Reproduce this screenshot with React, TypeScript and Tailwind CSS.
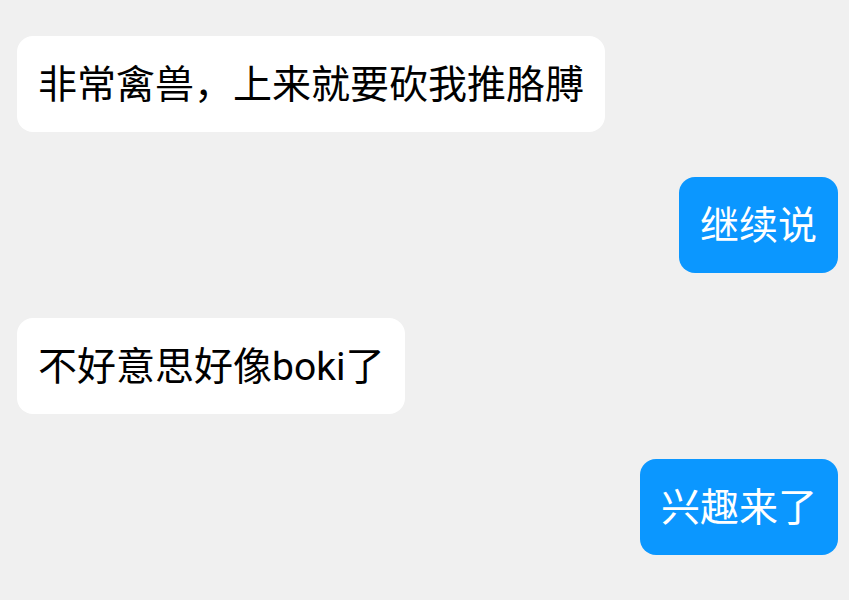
const messages = [
  { from: "them", text: "非常禽兽，上来就要砍我推胳膊" },
  { from: "me", text: "继续说" },
  { from: "them", text: "不好意思好像boki了" },
  { from: "me", text: "兴趣来了" },
];

const App = () => {
  return (
    <div
      className="min-h-[600px] w-full bg-[#f0f0f0] pt-[36px] pl-[17px] pr-[11px] flex flex-col gap-[45px]"
      style={{ fontFamily: 'Roboto, "Noto Sans CJK SC", sans-serif' }}
    >
      {messages.map((m, i) => (
        <div key={i} className={m.from === "me" ? "flex justify-end" : "flex justify-start"}>
          <div
            className={
              m.from === "me"
                ? "rounded-[16px] bg-[#0b97ff] text-white px-[21px] pt-[21px] pb-[19px] text-[39px] leading-[56px] whitespace-nowrap"
                : "rounded-[16px] bg-white text-black px-[21px] pt-[21px] pb-[19px] text-[39px] leading-[56px] whitespace-nowrap"
            }
          >
            {m.text}
          </div>
        </div>
      ))}
    </div>
  );
};

export default App;
